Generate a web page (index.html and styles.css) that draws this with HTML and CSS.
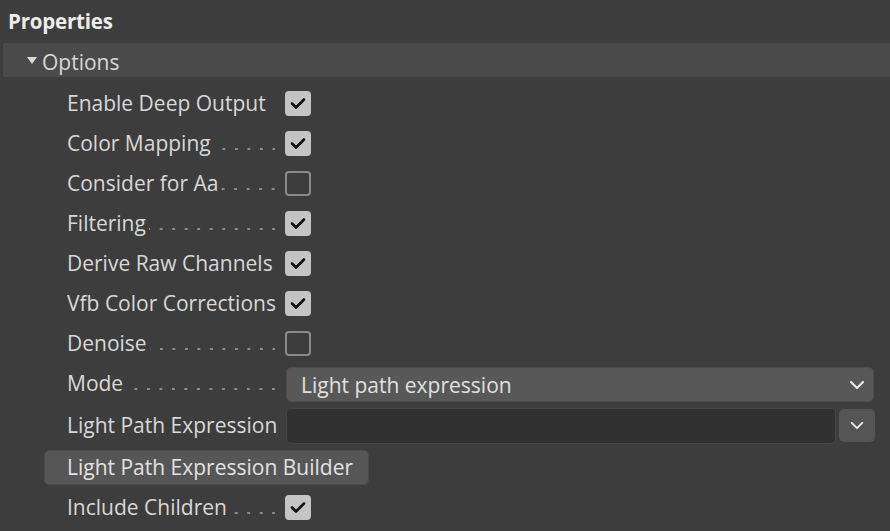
FILE: index.html
```
<!DOCTYPE html>
<html>
<head>
<meta charset="utf-8">
<link rel="stylesheet" href="styles.css">
</head>
<body>
<div class="panel">
  <div class="title">Properties</div>
  <div class="section">
    <span class="tri"></span><span class="section-name">Options</span>
  </div>
  <div class="rows">
    <div class="row"><div class="field"><span class="label">Enable Deep Output</span></div><span class="cb checked"><svg viewBox="0 0 26 25"><path d="M7 12.5 L11 16.5 L19 8.5"/></svg></span></div>
    <div class="row"><div class="field"><span class="label">Color Mapping</span><span class="lead"></span></div><span class="cb checked"><svg viewBox="0 0 26 25"><path d="M7 12.5 L11 16.5 L19 8.5"/></svg></span></div>
    <div class="row"><div class="field"><span class="label">Consider for Aa</span><span class="lead"></span></div><span class="cb"></span></div>
    <div class="row"><div class="field"><span class="label">Filtering</span><span class="lead"></span></div><span class="cb checked"><svg viewBox="0 0 26 25"><path d="M7 12.5 L11 16.5 L19 8.5"/></svg></span></div>
    <div class="row"><div class="field"><span class="label">Derive Raw Channels</span><span class="lead"></span></div><span class="cb checked"><svg viewBox="0 0 26 25"><path d="M7 12.5 L11 16.5 L19 8.5"/></svg></span></div>
    <div class="row"><div class="field"><span class="label">Vfb Color Corrections</span></div><span class="cb checked"><svg viewBox="0 0 26 25"><path d="M7 12.5 L11 16.5 L19 8.5"/></svg></span></div>
    <div class="row"><div class="field"><span class="label">Denoise</span><span class="lead"></span></div><span class="cb"></span></div>
    <div class="row mode"><div class="field"><span class="label">Mode</span><span class="lead"></span></div>
      <div class="select"><span>Light path expression</span><svg class="chev" viewBox="0 0 16 10"><path d="M2 2 L8 8 L14 2"/></svg></div>
    </div>
    <div class="row lpe"><div class="field"><span class="label">Light Path Expression</span></div>
      <div class="input"></div>
      <div class="mini"><svg class="chev small" viewBox="0 0 16 10"><path d="M2 2 L8 8 L14 2"/></svg></div>
    </div>
    <div class="row builder"><button class="btn">Light Path Expression Builder</button></div>
    <div class="row"><div class="field"><span class="label">Include Children</span><span class="lead"></span></div><span class="cb checked"><svg viewBox="0 0 26 25"><path d="M7 12.5 L11 16.5 L19 8.5"/></svg></span></div>
  </div>
</div>
</body>
</html>
```
FILE: styles.css
```
html, body {
  margin: 0;
  padding: 0;
  background: #3d3d3d;
}
body {
  width: 890px;
  height: 531px;
  overflow: hidden;
  font-family: "Open Sans", "Noto Sans", sans-serif;
  color: #dcdcdc;
}
.title {
  height: 43px;
  padding-left: 8px;
  font-size: 20.5px;
  font-weight: 700;
  line-height: 42px;
  color: #ececec;
  letter-spacing: -0.2px;
}
.section {
  margin-left: 3px;
  height: 34px;
  background: #4a4a4a;
  display: flex;
  align-items: center;
  padding-left: 24px;
}
.tri {
  width: 0;
  height: 0;
  border-left: 5.5px solid transparent;
  border-right: 5.5px solid transparent;
  border-top: 7px solid #dcdcdc;
  margin-right: 5px;
  margin-top: 1px;
}
.section-name {
  font-size: 21px;
  color: #d8d8d8;
  margin-top: 4px;
}
.rows {
  padding: 6px 15px 0 67px;
}
.row {
  height: 40px;
  display: flex;
  align-items: center;
  font-size: 21px;
}
.field {
  flex: none;
  width: 218px;
  display: flex;
  align-items: center;
}
.label {
  white-space: nowrap;
  color: #d8d8d8;
}
.lead {
  width: 0;
  flex: 1 0 0;
  height: 2px;
  margin: 11px 10px 0 3px;
  background-image: linear-gradient(to right, transparent 9.5px, #8c8c8c 9.5px);
  background-size: 12.5px 2px;
  background-repeat: repeat-x;
  background-position: right 0 top 0;
}
.cb {
  flex: none;
  width: 26px;
  height: 25px;
  box-sizing: border-box;
  border-radius: 4px;
  border: 2px solid #8a8a8a;
  display: flex;
}
.cb.checked {
  background: #c4c4c4;
  border-color: #c4c4c4;
}
.cb svg {
  width: 26px;
  height: 25px;
  margin: -2px;
}
.cb svg path {
  fill: none;
  stroke: #111;
  stroke-width: 2.6;
  stroke-linecap: round;
  stroke-linejoin: round;
}
.select {
  flex: none;
  width: 588px;
  height: 35px;
  margin-top: 3px;
  margin-left: 1px;
  box-sizing: border-box;
  background: #585858;
  border: 1px solid #4d4d4d;
  border-radius: 5px;
  display: flex;
  align-items: center;
  justify-content: space-between;
  padding: 0 8px 0 14px;
  color: #e0e0e0;
}
.chev {
  width: 16px;
  height: 10px;
}
.chev path {
  fill: none;
  stroke: #e8e8e8;
  stroke-width: 2.2;
  stroke-linecap: round;
  stroke-linejoin: round;
}
.chev.small { width: 14px; height: 9px; }
.row.lpe {
  height: 41px;
}
.row.lpe .label { margin-top: 2px; }
.input {
  flex: none;
  width: 550px;
  height: 36px;
  margin-top: 4px;
  margin-left: 1px;
  box-sizing: border-box;
  background: #313131;
  border: 1.5px solid #464646;
  border-radius: 5px;
}
.mini {
  flex: none;
  width: 36px;
  height: 33px;
  margin: 4px 0 0 3px;
  background: #555555;
  border-radius: 5px;
  display: flex;
  align-items: center;
  justify-content: center;
}
.row.builder {
  height: 43px;
  margin-left: -23px;
}
.btn {
  width: 325px;
  height: 35px;
  margin-top: 3px;
  background: #565656;
  border: 1px solid #4a4a4a;
  border-radius: 5px;
  font-family: inherit;
  font-size: 21px;
  color: #e2e2e2;
  text-align: left;
  padding: 0 0 0 22px;
}
```
